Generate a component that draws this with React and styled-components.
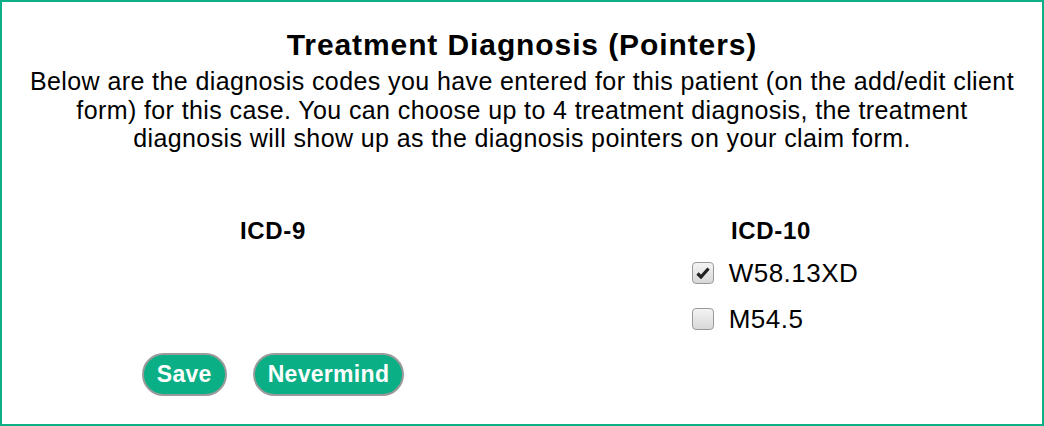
import React from 'react';
import styled, { createGlobalStyle } from 'styled-components';

const GlobalStyle = createGlobalStyle`
  body {
    margin: 0;
    background: #fff;
    font-family: "Liberation Sans", Arial, sans-serif;
    color: #000;
  }
`;

const codes10 = [
  { code: 'W58.13XD', checked: true },
  { code: 'M54.5', checked: false },
];

const Checkbox = ({ checked }) => (
  <CheckBox>
    {checked && (
      <svg width="14" height="12" viewBox="0 0 14 12">
        <path d="M1.5 6.5 L5 10 L12.5 1.5" fill="none" stroke="#222" strokeWidth="3.2" strokeLinejoin="miter" />
      </svg>
    )}
  </CheckBox>
);

const App = () => {
  return (
    <Frame>
      <GlobalStyle />
      <Title>Treatment Diagnosis (Pointers)</Title>
      <Intro>
        Below are the diagnosis codes you have entered for this patient (on the add/edit client<br />
        form) for this case. You can choose up to 4 treatment diagnosis, the treatment<br />
        diagnosis will show up as the diagnosis pointers on your claim form.
      </Intro>
      <Columns>
        <Column>
          <ColumnTitle>ICD-9</ColumnTitle>
        </Column>
        <Column>
          <ColumnTitle>ICD-10</ColumnTitle>
          <CodeList>
            {codes10.map((c) => (
              <CodeRow key={c.code}>
                <Checkbox checked={c.checked} />
                {c.code}
              </CodeRow>
            ))}
          </CodeList>
        </Column>
      </Columns>
      <Columns>
        <Actions>
          <Button>Save</Button>
          <Button>Nevermind</Button>
        </Actions>
      </Columns>
    </Frame>
  );
};

const Frame = styled.div`
  box-sizing: border-box;
  width: 1044px;
  height: 426px;
  border: 2px solid #0daf86;
  padding: 27px 22px 0;
`;

const Title = styled.h1`
  margin: 0 0 6px;
  font-size: 30px;
  font-weight: bold;
  letter-spacing: 0.9px;
  line-height: 32px;
  text-align: center;
`;

const Intro = styled.p`
  margin: 0;
  font-size: 25px;
  letter-spacing: 0.4px;
  line-height: 28.6px;
  text-align: center;
  white-space: nowrap;
`;

const Columns = styled.div`
  display: grid;
  grid-template-columns: 1fr 1fr;
`;

const Column = styled.div`
  display: flex;
  flex-direction: column;
  align-items: center;
  padding-top: 65px;
`;

const ColumnTitle = styled.div`
  font-size: 24px;
  font-weight: bold;
  letter-spacing: 0.7px;
  line-height: 26px;
`;

const CodeList = styled.div`
  display: flex;
  flex-direction: column;
  gap: 20px;
  margin-top: 16px;
  padding-left: 8px;
`;

const CodeRow = styled.label`
  display: flex;
  align-items: center;
  gap: 15px;
  font-size: 26px;
  letter-spacing: 0.5px;
  line-height: 26px;
`;

const CheckBox = styled.span`
  box-sizing: border-box;
  width: 22px;
  height: 22px;
  border: 1px solid #999;
  border-radius: 4px;
  background: linear-gradient(#f4f4f4, #d8d8d8);
  display: flex;
  align-items: center;
  justify-content: center;
`;

const Actions = styled.div`
  display: flex;
  justify-content: center;
  gap: 26px;
  margin-top: 21px;
`;

const Button = styled.button`
  box-sizing: border-box;
  height: 43px;
  padding: 0 13px;
  border: 2px solid #9a9a9a;
  border-radius: 22px;
  background: #0aaf85;
  color: #fff;
  font-family: "Liberation Sans", Arial, sans-serif;
  font-size: 23px;
  font-weight: bold;
  letter-spacing: 0.3px;
  cursor: pointer;
`;

export default App;
